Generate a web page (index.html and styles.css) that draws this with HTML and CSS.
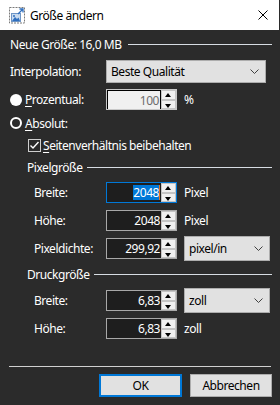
FILE: index.html
```html
<!DOCTYPE html>
<html lang="de">
<head>
  <meta charset="UTF-8">
  <meta name="viewport" content="width=device-width, initial-scale=1.0">
  <title>Größe ändern</title>
  <link rel="stylesheet" href="styles.css">
</head>
<body>
  <div class="window">
    <div class="titlebar">
      <svg class="app-icon" width="16" height="17" viewBox="0 0 16 17">
        <rect x="0.5" y="0.5" width="15" height="15.5" fill="none" stroke="#7a7a7a" stroke-dasharray="2 1"/>
        <rect x="2.5" y="6.5" width="9" height="8" fill="#c9dbef" stroke="#6f96c6"/>
        <path d="M3 14 L6 10 L8 12 L9.5 10.5 L11 14 Z" fill="#2f6fbf"/>
        <circle cx="5" cy="9" r="1" fill="#2f6fbf"/>
        <path d="M9 7 L14 2 M10.5 2 H14 V5.5" fill="none" stroke="#2f6fbf" stroke-width="1.3"/>
      </svg>
      <span class="title">Größe ändern</span>
      <svg class="close" width="10" height="10" viewBox="0 0 10 10">
        <path d="M0.5 0.5 L9.5 9.5 M9.5 0.5 L0.5 9.5" stroke="#000" stroke-width="1"/>
      </svg>
    </div>

    <div class="content">
      <div class="head top">
        <span>Neue Größe: 16,0 MB</span>
        <i class="rule"></i>
      </div>

      <div class="row interp">
        <label class="cell">Interpolation:</label>
        <div class="select wide">
          <span>Beste Qualität</span>
          <svg class="chev" width="9" height="5" viewBox="0 0 9 5"><path d="M0.5 0.5 L4.5 4.5 L8.5 0.5" fill="none" stroke="#404040"/></svg>
        </div>
      </div>

      <div class="row prozent">
        <label class="cell"><span class="radio on"></span><span><u>P</u>rozentual:</span></label>
        <div class="spin disabled">
          <span class="val">100</span>
          <span class="btns"><b class="up"></b><b class="down"></b></span>
        </div>
        <span class="unit">%</span>
      </div>

      <div class="row line absolut">
        <label class="cell"><span class="radio ring"></span><span><u>A</u>bsolut:</span></label>
      </div>

      <div class="row line check">
        <svg class="checkbox" width="13" height="13" viewBox="0 0 13 13">
          <rect x="0.5" y="0.5" width="12" height="12" fill="none" stroke="#cfcfcf"/>
          <path d="M2.5 6.5 L5 9 L10.5 3" fill="none" stroke="#fff" stroke-width="1.4"/>
        </svg>
        <span><u>S</u>eitenverhältnis beibehalten</span>
      </div>

      <div class="head group pixel">
        <span>Pixelgröße</span>
        <i class="rule"></i>
      </div>

      <div class="row field f1">
        <label class="cell sub">Breite:</label>
        <div class="spin focus">
          <span class="val"><em class="sel">2048</em><i class="caret"></i></span>
          <span class="btns"><b class="up"></b><b class="down"></b></span>
        </div>
        <span class="unit">Pixel</span>
      </div>

      <div class="row field f2">
        <label class="cell sub">Höhe:</label>
        <div class="spin">
          <span class="val">2048</span>
          <span class="btns"><b class="up"></b><b class="down"></b></span>
        </div>
        <span class="unit">Pixel</span>
      </div>

      <div class="row field f2">
        <label class="cell sub">Pixeldichte:</label>
        <div class="spin">
          <span class="val">299,92</span>
          <span class="btns"><b class="up"></b><b class="down"></b></span>
        </div>
        <div class="select unitsel">
          <span>pixel/in</span>
          <svg class="chev" width="9" height="5" viewBox="0 0 9 5"><path d="M0.5 0.5 L4.5 4.5 L8.5 0.5" fill="none" stroke="#404040"/></svg>
        </div>
      </div>

      <div class="head group druck">
        <span>Druckgröße</span>
        <i class="rule"></i>
      </div>

      <div class="row field f3">
        <label class="cell sub">Breite:</label>
        <div class="spin">
          <span class="val">6,83</span>
          <span class="btns"><b class="up"></b><b class="down"></b></span>
        </div>
        <div class="select unitsel">
          <span>zoll</span>
          <svg class="chev" width="9" height="5" viewBox="0 0 9 5"><path d="M0.5 0.5 L4.5 4.5 L8.5 0.5" fill="none" stroke="#404040"/></svg>
        </div>
      </div>

      <div class="row field f2">
        <label class="cell sub">Höhe:</label>
        <div class="spin">
          <span class="val">6,83</span>
          <span class="btns"><b class="up"></b><b class="down"></b></span>
        </div>
        <span class="unit">zoll</span>
      </div>

      <hr class="sep">

      <div class="buttons">
        <button class="btn default">OK</button>
        <button class="btn">Abbrechen</button>
      </div>
    </div>
  </div>
</body>
</html>
```

FILE: styles.css
```css
body {
  margin: 0;
  background: #2b2b2b;
  font-family: "Noto Sans", "Open Sans", sans-serif;
  font-size: 12px;
  letter-spacing: -0.45px;
  color: #fff;
}
.window {
  width: 280px;
  height: 405px;
  background: #2b2b2b;
  overflow: hidden;
}
.titlebar {
  width: 279px;
  height: 30px;
  background: #fff;
  display: flex;
  align-items: center;
  color: #000;
}
.app-icon {
  margin-left: 9px;
}
.title {
  margin-left: 5px;
  flex: 1;
}
.close {
  margin-right: 11px;
}

.content {
  padding: 0 8px 0 10px;
}

/* section headings with a rule */
.head {
  display: flex;
  align-items: center;
  height: 20px;
}
.head .rule {
  flex: 1;
  height: 1px;
  background: #d6dce2;
  margin-left: 6px;
}
.head.top {
  margin-top: 4px;
}
.head.group {
  padding-left: 17px;
}
.head.group .rule {
  margin-left: 4px;
}
.head.pixel {
  margin-top: 2px;
}
.head.druck {
  margin-top: 5px;
}

/* rows */
.row {
  display: grid;
  grid-template-columns: 96px 71px 1fr;
  align-items: center;
  height: 21px;
}
.cell {
  display: flex;
  align-items: center;
}
.cell.sub {
  padding-left: 24px;
}
.unit {
  margin-left: 7px;
}
.row.interp {
  margin-top: 6px;
  height: 23px;
  grid-template-columns: 96px 1fr;
}
.row.prozent {
  margin-top: 6px;
}
.row.line {
  display: flex;
  height: 20px;
}
.row.absolut {
  margin-top: 3px;
}
.row.check {
  margin-top: 2px;
  padding-left: 18px;
}
.checkbox {
  margin-right: 2px;
}
.row.f1 {
  margin-top: 5px;
}
.row.f2 {
  margin-top: 7px;
}
.row.f3 {
  margin-top: 6px;
}

u {
  text-decoration-thickness: 1px;
  text-underline-offset: 2px;
}

/* radio buttons */
.radio {
  width: 12px;
  height: 12px;
  border-radius: 50%;
  box-sizing: border-box;
  margin-right: 3px;
}
.radio.on {
  background: #fff;
}
.radio.ring {
  border: 2px solid #fff;
}

/* combo boxes */
.select {
  display: flex;
  align-items: center;
  justify-content: space-between;
  box-sizing: border-box;
  background: #e1e1e1;
  border: 1px solid #adadad;
  color: #000;
  padding: 0 6px 0 4px;
}
.select.wide {
  height: 23px;
  width: 160px;
}
.select.unitsel {
  width: 86px;
  height: 25px;
  margin: -2px 0 -2px 7px;
}

/* spin boxes */
.spin {
  display: flex;
  box-sizing: border-box;
  width: 71px;
  height: 21px;
  border: 1px solid #a8a8a8;
  background: #1e1e1e;
}
.spin.focus {
  border-color: #0078d7;
}
.spin .val {
  flex: 1;
  display: flex;
  justify-content: flex-end;
  align-items: center;
  padding-right: 1px;
}
.sel {
  font-style: normal;
  background: #0078d7;
  color: #fff;
  line-height: 15px;
}
.caret {
  width: 1px;
  height: 15px;
  background: #e07020;
}
.spin.disabled {
  border-color: #c8c8c8;
}
.spin.disabled .val {
  background: #f0f0f0;
  color: #6d6d6d;
  border-left: 1px solid #000;
  border-top: 1px solid #000;
  border-right: 1px solid #000;
}
.btns {
  width: 15px;
  display: flex;
  flex-direction: column;
}
.btns b {
  flex: 1;
  background: #f0f0f0;
  border: 1px solid #c4c4c4;
  position: relative;
}
.btns b::after {
  content: "";
  position: absolute;
  left: 3px;
  border-left: 3.5px solid transparent;
  border-right: 3.5px solid transparent;
}
.btns .up::after {
  top: 2px;
  border-bottom: 4px solid #000;
}
.btns .down::after {
  top: 3px;
  border-top: 4px solid #000;
}

/* footer */
.sep {
  margin: 27px 1px 0 -1px;
  border: 0;
  height: 1px;
  background: #d0d0d0;
}
.buttons {
  display: flex;
  justify-content: flex-end;
  gap: 8px;
  margin-top: 7px;
}
.btn {
  font-family: inherit;
  font-size: 12px;
  letter-spacing: -0.45px;
  height: 23px;
  width: 82px;
  background: #e1e1e1;
  border: 1px solid #adadad;
  color: #000;
  padding: 0;
}
.btn.default {
  width: 83px;
  border: 2px solid #0078d7;
}
```
